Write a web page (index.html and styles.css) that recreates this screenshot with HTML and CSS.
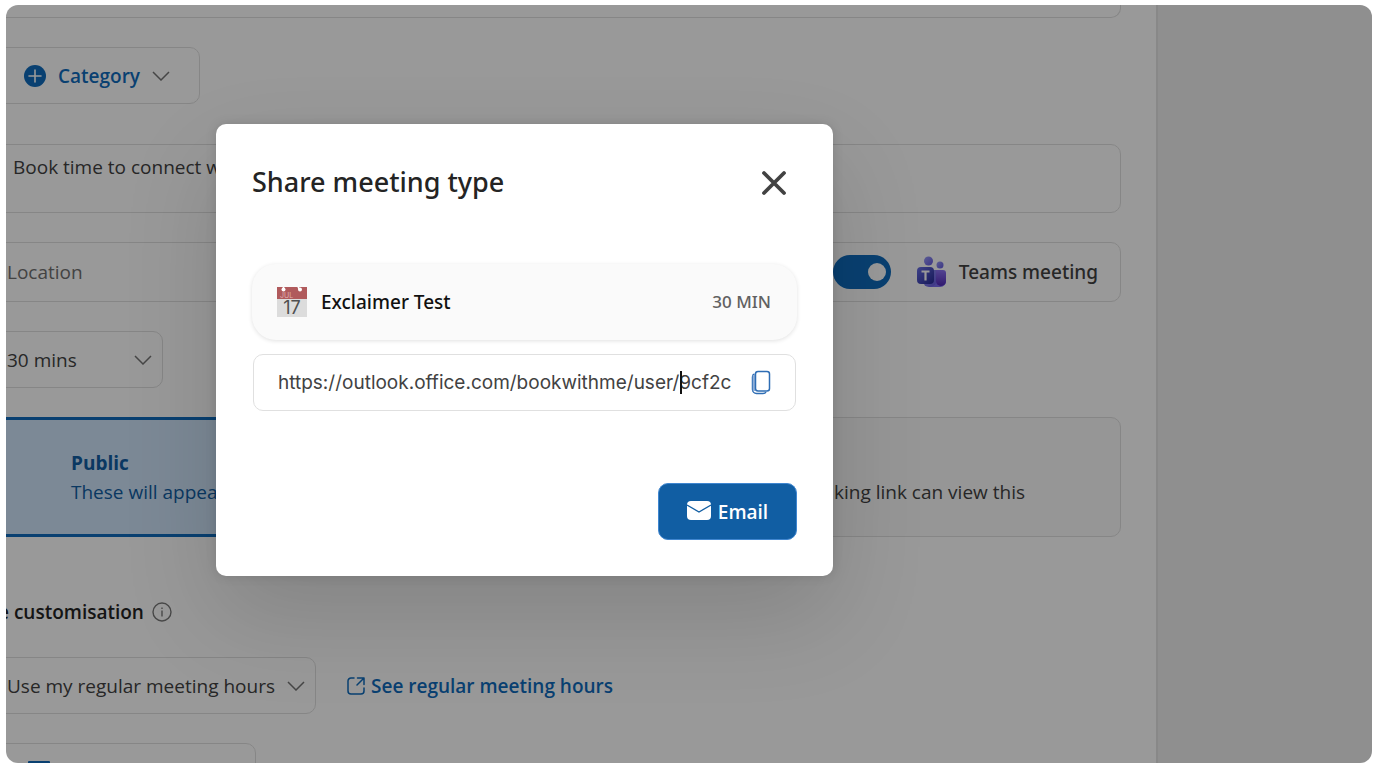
FILE: index.html
```html
<!DOCTYPE html>
<html lang="en">
<head>
  <meta charset="UTF-8" />
  <meta name="viewport" content="width=device-width, initial-scale=1.0" />
  <title>Share meeting type</title>
  <link rel="stylesheet" href="styles.css">
</head>
<body>
  <div class="frame">
    <main class="page">
      <form class="form">
        <input class="field title-field" type="text" aria-label="Title">

        <button class="field category" type="button">
          <svg width="22" height="22" viewBox="0 0 22 22"><circle cx="11" cy="11" r="11" fill="#0f6cbd"/><path d="M11 5v12M5 11h12" stroke="#fff" stroke-width="1.6" stroke-linecap="round"/></svg>
          <span>Category</span>
          <svg class="chevron" width="18" height="10" viewBox="0 0 18 10"><path d="M1 1l8 8 8-8"/></svg>
        </button>

        <textarea class="field description" aria-label="Description">Book time to connect w</textarea>

        <div class="field location">
          <input type="text" placeholder="Location" aria-label="Location">
          <input class="toggle" type="checkbox" id="teams" checked>
          <label for="teams">
            <svg width="30" height="32" viewBox="0 0 30 32">
              <defs>
                <linearGradient id="teamsBody" x1="0" y1="0" x2="1" y2="1"><stop offset="0" stop-color="#9a9cf8"/><stop offset="1" stop-color="#6358dc"/></linearGradient>
                <linearGradient id="teamsSide" x1="0" y1="0" x2="0" y2="1"><stop offset="0" stop-color="#8a72f2"/><stop offset="1" stop-color="#5229b8"/></linearGradient>
                <linearGradient id="teamsBox" x1="0" y1="0" x2="1" y2="1"><stop offset="0" stop-color="#6a70e6"/><stop offset="1" stop-color="#262a94"/></linearGradient>
              </defs>
              <circle cx="12.500" cy="5" r="4.500" fill="url(#teamsBody)"/>
              <circle cx="24" cy="9" r="3.500" fill="url(#teamsBody)"/>
              <path d="M7 14h13v17h-7a6 6 0 0 1-6-6z" fill="url(#teamsBody)"/>
              <path d="M12 31c5 0 8-2 8-6l10-1a6 6 0 0 1-6 7z" fill="#7a6cf0"/>
              <path d="M20 14h7a3 3 0 0 1 3 3v8a5 5 0 0 1-5 5 5 5 0 0 1-5-5z" fill="url(#teamsSide)"/>
              <rect x="1" y="11" width="17" height="17" rx="4" fill="url(#teamsBox)"/>
              <path d="M5.500 15.500h8M9.500 15.500v9" stroke="#fff" stroke-width="2.200"/>
            </svg>
            Teams meeting
          </label>
        </div>

        <div class="select-box duration">
          <select class="field" aria-label="Duration"><option>30 mins</option></select>
          <svg class="chevron" width="18" height="10" viewBox="0 0 18 10"><path d="M1 1l8 8 8-8"/></svg>
        </div>

        <div class="visibility">
          <button class="option selected" type="button">
            <strong>Public</strong>
            <span>These will appea</span>
          </button>
          <button class="option private" type="button">
            <span>king link can view this</span>
          </button>
        </div>

        <h2>e customisation
          <svg width="20" height="20" viewBox="0 0 20 20" fill="none" stroke="#7a7a7a" stroke-width="1.400"><circle cx="10" cy="10" r="9"/><path d="M10 8.500v6M10 5.500v1.500"/></svg>
        </h2>

        <div class="hours">
          <div class="select-box availability">
            <select class="field" aria-label="Availability"><option>Use my regular meeting hours</option></select>
            <svg class="chevron" width="18" height="10" viewBox="0 0 18 10"><path d="M1 1l8 8 8-8"/></svg>
          </div>
          <a href="#">
            <svg width="18" height="18" viewBox="0 0 18 18" fill="none" stroke="#0f6cbd" stroke-width="1.500" stroke-linecap="round" stroke-linejoin="round"><path d="M7 1H4a3 3 0 0 0-3 3v10a3 3 0 0 0 3 3h10a3 3 0 0 0 3-3v-3M10.500 1H17v6.500M17 1l-7 7"/></svg>
            See regular meeting hours
          </a>
        </div>

        <button class="field calendar" type="button" aria-label="Calendar">
          <svg width="22" height="18" viewBox="0 0 22 18"><rect width="22" height="18" rx="1" fill="#0f6cbd"/></svg>
        </button>
      </form>
    </main>
    <aside class="side"></aside>

    <div class="overlay">
      <div class="dialog" role="dialog" aria-labelledby="dialogTitle">
        <div class="dialog-head">
          <h1 id="dialogTitle">Share meeting type</h1>
          <button class="close" type="button" aria-label="Close">
            <svg width="26" height="26" viewBox="0 0 26 26"><path d="M3 3l20 20M23 3L3 23" stroke="#424242" stroke-width="3.800" stroke-linecap="round"/></svg>
          </button>
        </div>

        <div class="meeting">
          <svg class="date-icon" width="30" height="30" viewBox="0 0 30 30">
            <rect width="30" height="30" fill="#dcdcdc"/>
            <path d="M0 0h30v12H0z" fill="#b05a5c"/>
            <circle cx="6.500" cy="2.500" r="2" fill="#fff"/>
            <circle cx="23" cy="2.500" r="2" fill="#fff"/>
            <path d="M6.500 0v3M21 0l2 3" stroke="#fff" stroke-width="1.600"/>
            <text x="3" y="11" font-size="7" fill="#dfaeb0">JUL</text>
            <text x="15" y="27" font-size="18" fill="#505050" text-anchor="middle">17</text>
          </svg>
          <strong>Exclaimer Test</strong>
          <span>30 MIN</span>
        </div>

        <div class="link-box">
          <input type="text" aria-label="Meeting link" value="https://outlook.office.com/bookwithme/user/9cf2c">
          <span class="caret"></span>
          <button type="button" aria-label="Copy link">
            <svg width="20" height="26" viewBox="0 0 20 26" fill="none" stroke="#2e6db4"><path d="M3.500 4C2 4.500 1.500 5.500 1.500 7v12.500a4 4 0 0 0 4 4H12c1.500 0 2.500-.500 3-1.500" stroke-width="1.500"/><path d="M3 5v16" stroke="#8fafd9" stroke-width="2.500"/><rect x="4.500" y="1.500" width="14" height="19.500" rx="2.500" stroke-width="1.500" fill="#fff"/></svg>
          </button>
        </div>

        <button class="email" type="button">
          <svg width="24" height="24" viewBox="0 0 24 24"><rect y="1" width="24" height="19" rx="4" fill="#fff"/><path d="M0 5l12 7 12-7" fill="none" stroke="#115ea3" stroke-width="1.300"/></svg>
          Email
        </button>
      </div>
    </div>
  </div>
</body>
</html>
```
FILE: styles.css
```css
* {
  box-sizing: border-box;
}

body {
  margin: 0;
  padding: 5px 5px 6px 6px;
  height: 100vh;
  background-color: #fff;
  font-family: "Segoe UI", "Open Sans", sans-serif;
  font-size: 19px;
  line-height: 24px;
  color: #424242;
}

button, input, select, textarea {
  font: inherit;
  color: inherit;
  margin: 0;
}

button {
  cursor: pointer;
}

.frame {
  position: relative;
  display: flex;
  height: 100%;
  border-radius: 12px;
  overflow: hidden;
  background-color: #fff;
}

.page {
  flex: 1;
  overflow: hidden;
}

.side {
  width: 216px;
  background-color: #eee;
  border-left: 2px solid #e3e3e3;
}

/* the form starts left of the visible area */
.form {
  display: flex;
  flex-direction: column;
  align-items: flex-start;
  gap: 29px;
  margin-left: -16px;
  padding-right: 35px;
}

.field {
  border: 1px solid #e0e0e0;
  border-radius: 10px;
  background-color: #fff;
  height: 57px;
  padding: 0 16px;
}

.title-field {
  width: 100%;
  height: 13px;
  border-top: none;
  border-radius: 0 0 10px 10px;
}

.category {
  display: flex;
  align-items: center;
  gap: 12px;
  width: 210px;
  padding-left: 33px;
  color: #0f6cbd;
  font-weight: 600;
}

.chevron {
  fill: none;
  stroke: #757575;
  stroke-width: 1.500;
}

.description {
  width: 100%;
  height: 69px;
  margin-top: 11px;
  padding: 10px 22px;
  resize: none;
  display: block;
}

.location {
  display: flex;
  align-items: center;
  width: 100%;
  height: 60px;
  padding-right: 22px;
}

.location input[type="text"] {
  flex: 1;
  border: none;
  padding: 0;
}

.location input::placeholder {
  color: #707070;
}

.location label {
  display: flex;
  align-items: center;
  gap: 13px;
  margin-left: 25px;
  font-family: "Segoe UI", "Noto Sans", sans-serif;
  font-weight: 500;
}

.toggle {
  appearance: none;
  display: flex;
  align-items: center;
  justify-content: flex-end;
  width: 58px;
  height: 34px;
  padding-right: 5px;
  border-radius: 17px;
  background-color: #0f6cbd;
}

.toggle::before {
  content: "";
  width: 18px;
  height: 18px;
  border-radius: 50%;
  background-color: #fff;
}

.select-box {
  display: grid;
  align-items: center;
}

.select-box select,
.select-box .chevron {
  grid-area: 1 / 1;
}

.select-box select {
  appearance: none;
  width: 100%;
}

.select-box .chevron {
  justify-self: end;
  margin-right: 11px;
  pointer-events: none;
}

.duration {
  width: 173px;
}

.visibility {
  display: flex;
  width: 100%;
  height: 120px;
}

.option {
  flex: 1;
  display: flex;
  flex-direction: column;
  justify-content: center;
  gap: 5px;
  border: 1px solid #e0e0e0;
  border-radius: 10px;
  background-color: #fafafa;
  text-align: left;
}

.option.selected {
  border: 3px solid #0f6cbd;
  background-color: #cfe4fa;
  padding-left: 78px;
  color: #115ea3;
}

.option.private {
  align-items: flex-end;
  justify-content: flex-end;
  padding: 0 95px 32px 0;
}

h2 {
  display: flex;
  align-items: center;
  gap: 8px;
  margin: 34px 0 4px;
  padding-left: 8px;
  font-size: 19px;
  font-weight: 600;
  color: #242424;
}

.hours {
  display: flex;
  align-items: center;
  gap: 31px;
}

.availability {
  width: 326px;
}

.hours a {
  display: flex;
  align-items: center;
  gap: 6px;
  color: #0f6cbd;
  font-weight: 600;
  text-decoration: none;
}

.calendar {
  width: 266px;
  padding-left: 37px;
  text-align: left;
}

.overlay {
  position: absolute;
  inset: 0;
  padding: 119px 0 0 210px;
  background-color: rgba(0, 0, 0, 0.4);
}

.dialog {
  display: flex;
  flex-direction: column;
  width: 617px;
  padding: 36px;
  border-radius: 10px;
  background-color: #fff;
  box-shadow: 0 0 12px rgba(0, 0, 0, 0.12), 0 40px 96px rgba(0, 0, 0, 0.14);
}

.dialog-head {
  display: flex;
  align-items: center;
  justify-content: space-between;
  height: 46px;
  margin-bottom: 58px;
  padding-right: 10px;
}

h1 {
  margin: 0;
  font-family: "Segoe UI", "Noto Sans", sans-serif;
  font-size: 27px;
  line-height: 48px;
  align-self: flex-start;
  height: 44px;
  line-height: 44px;
  font-weight: 500;
  color: #242424;
}

.close {
  display: flex;
  padding: 0;
  border: none;
  background: none;
}

.meeting {
  display: flex;
  align-items: center;
  gap: 14px;
  height: 76px;
  padding: 0 26px 0 25px;
  border-radius: 24px;
  background-color: #fafafa;
  box-shadow: 0 1px 4px rgba(0, 0, 0, 0.12);
  font-family: "Segoe UI", "Noto Sans", sans-serif;
}

.date-icon {
  font-family: Inter, sans-serif;
}

.meeting strong {
  flex: 1;
  font-weight: 500;
  color: #111;
}

.meeting span {
  font-size: 17px;
  font-weight: 500;
  color: #616161;
}

.link-box {
  position: relative;
  display: flex;
  align-items: center;
  gap: 18px;
  height: 57px;
  margin: 14px 1px 72px;
  padding: 0 24px;
  border: 1px solid #e0e0e0;
  border-radius: 10px;
}

.link-box input {
  flex: 1;
  min-width: 0;
  padding: 0;
  border: none;
  font-family: Inter, sans-serif;
  font-size: 19px;
}

.link-box button {
  display: flex;
  padding: 0;
  border: none;
  background: none;
}

.caret {
  position: absolute;
  left: 426px;
  top: 16px;
  width: 2px;
  height: 23px;
  background-color: #111;
}

.email {
  display: flex;
  align-items: center;
  justify-content: center;
  align-self: flex-end;
  gap: 7px;
  width: 139px;
  height: 57px;
  border: 1px solid #3f86d0;
  border-radius: 10px;
  background-color: #115ea3;
  color: #fff;
  font-weight: 600;
}
```
